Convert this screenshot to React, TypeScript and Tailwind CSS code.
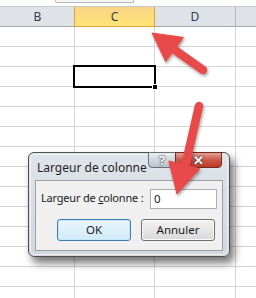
import React from "react";

const rows = Array.from({ length: 14 });

function Row() {
  return (
    <div className="flex h-[20px] border-b border-[#d6d6d6]">
      <div className="w-[75px] shrink-0 border-r border-[#d6d6d6]" />
      <div className="w-[80px] shrink-0 border-r border-[#d6d6d6]" />
      <div className="w-[81px] shrink-0 border-r border-[#d6d6d6]" />
      <div className="flex-1" />
    </div>
  );
}

export default function App() {
  return (
    <div
      className="relative w-[256px] h-[298px] overflow-hidden bg-white"
      style={{ fontFamily: '"Noto Sans", "Open Sans", sans-serif' }}
    >
      {/* top strip */}
      <div className="h-[6px] bg-white flex">
        <div className="w-[55px]" />
        <div className="w-[79px] h-[3px] border-b border-l border-r border-[#b8bcc2] rounded-bl-[2px] bg-[#f4f5f6]" />
      </div>
      {/* header */}
      <div className="flex h-[21px] border-t border-[#c6cbd1] bg-[#dfe3e8] text-[12px] text-[#2f3b4d]">
        <div className="w-[75px] shrink-0 border-r border-b border-r-[#b3b9c0] border-b-[#a4a9ae] flex items-center justify-center pl-[1px]">
          B
        </div>
        <div className="shrink-0 -ml-[1px] w-[81px] border-l border-r border-b border-[#e0a03c] bg-gradient-to-b from-[#f9d386] to-[#ffe675] flex items-center justify-center">
          C
        </div>
        <div className="w-[81px] shrink-0 border-r border-b border-r-[#b3b9c0] border-b-[#a4a9ae] flex items-center justify-center">
          D
        </div>
        <div className="flex-1 border-b border-[#a4a9ae]" />
      </div>
      {rows.map((_, i) => (
        <Row key={i} />
      ))}

      {/* selected cell */}
      <div className="absolute left-[73px] top-[65px] w-[83px] h-[23px] border-[2px] border-black" />
      <div className="absolute left-[152px] top-[84px] w-[6px] h-[6px] bg-black border border-white" />

      {/* dialog */}
      <div className="absolute left-[28px] top-[152px] w-[202px] h-[105px] rounded-[6px] border border-[#4d4f52] bg-gradient-to-b from-[#dfe4ea] to-[#d3d8de] shadow-[4px_6px_9px_rgba(0,0,0,0.55)]">
        <div className="absolute inset-[1px] rounded-[5px] border border-[#f4f6f8]/70 pointer-events-none" />
        {/* title */}
        <div className="h-[27px] flex items-center pl-[8px] pt-[2px] text-[12px] text-[#1e1e1e] whitespace-nowrap">
          Largeur de colonne
        </div>
        {/* title buttons */}
        <div className="absolute top-[-1px] left-[119px] flex">
          <div className="w-[28px] h-[16px] rounded-bl-[4px] border border-[#6b7078] bg-gradient-to-b from-[#e9edf1] to-[#b9c1ca] flex items-center justify-center text-[13px] font-bold text-white [text-shadow:0_0_1px_#333,0_0_2px_#333] leading-none">
            ?
          </div>
          <div className="w-[47px] h-[16px] -ml-[1px] rounded-br-[4px] border border-[#6e2b24] bg-gradient-to-b from-[#e3a093] via-[#c9584a] to-[#c0392b] flex items-center justify-center text-[13px] font-bold text-white [text-shadow:0_0_1px_#333,0_0_2px_#333] leading-none">
            ✕
          </div>
        </div>
        {/* client */}
        <div className="mx-[6px] h-[71px] border border-[#9aa0a6] bg-[#f0f0f0] text-[11px] text-[#1a1a1a]">
          <div className="flex items-center pt-[7px] h-[28px]">
            <div className="pl-[5px] w-[114px] whitespace-nowrap tracking-[-0.2px]">
              Largeur de <span className="underline">c</span>olonne :
            </div>
            <div className="w-[67px] h-[20px] border border-[#abadb3] bg-white flex items-center pl-[3px] text-[11.5px]">
              0
            </div>
          </div>
          <div className="flex pt-[10px] text-[11.5px]">
            <div className="ml-[21px] w-[74px] h-[22px] rounded-[3px] border border-[#3c7fb1] bg-gradient-to-b from-[#eaf6fd] to-[#d1e9f7] shadow-[inset_0_0_0_1px_#c7e6f8] flex items-center justify-center">
              OK
            </div>
            <div className="ml-[10px] w-[74px] h-[22px] rounded-[3px] border border-[#707070] bg-gradient-to-b from-[#f2f2f2] to-[#d9d9d9] shadow-[inset_0_0_0_1px_#fafafa] flex items-center justify-center">
              Annuler
            </div>
          </div>
        </div>
      </div>

      {/* arrows */}
      <svg
        className="absolute inset-0 pointer-events-none"
        width="256"
        height="298"
        viewBox="0 0 256 298"
      >
        <defs>
          <filter id="sh" x="-20%" y="-20%" width="140%" height="140%">
            <feDropShadow dx="1" dy="2" stdDeviation="1.5" floodColor="#000" floodOpacity="0.35" />
          </filter>
        </defs>
        <g filter="url(#sh)" fill="#e84a48" stroke="#e84a48">
          <line x1="203" y1="70" x2="172" y2="48" strokeWidth="8.5" strokeLinecap="round" />
          <polygon points="152,33 183.5,37.4 165.7,61.6" strokeWidth="1" strokeLinejoin="round" />
        </g>
        <g filter="url(#sh)" fill="#e84a48" stroke="#e84a48">
          <line x1="199" y1="106" x2="185" y2="167" strokeWidth="8.5" strokeLinecap="round" />
          <polygon points="177,194 199.8,168.8 168.8,161" strokeWidth="1" strokeLinejoin="round" />
        </g>
      </svg>
    </div>
  );
}
